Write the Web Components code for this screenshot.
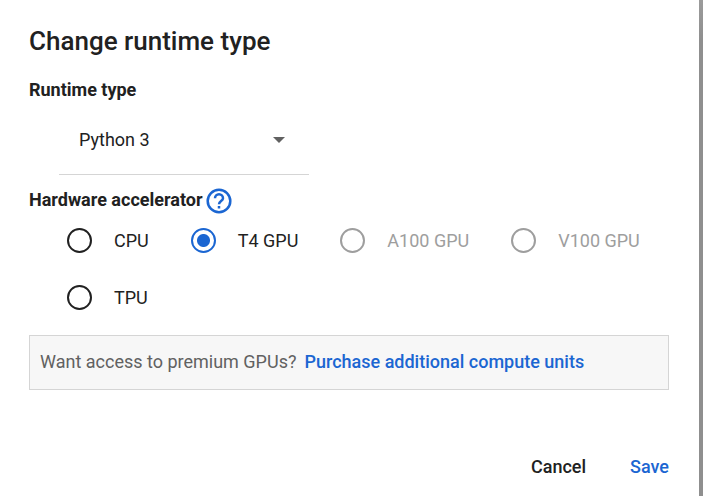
<!DOCTYPE html>
<html lang="en">
<head>
<meta charset="utf-8">
<title>Change runtime type</title>
<style>
  body {
    margin: 0;
    min-height: 100vh;
    background: linear-gradient(#9b9b9b, #8f8f8f 40px);
    display: flex;
    font: 18px/24px Roboto, sans-serif;
    color: #212121;
    --blue: #1b66d2;
    --grey: #616161;
    --line: #d5d5d5;
  }
</style>
</head>
<body>
<runtime-dialog heading="Change runtime type">
  <runtime-select label="Runtime type" options="Python 3,R"></runtime-select>
  <accelerator-picker label="Hardware accelerator" options="CPU,T4 GPU,A100 GPU,V100 GPU,TPU" disabled="A100 GPU,V100 GPU" value="T4 GPU"></accelerator-picker>
  <upgrade-banner href="#signup">
    Want access to premium GPUs?
    <span slot="link">Purchase additional compute units</span>
  </upgrade-banner>
  <dialog-button slot="actions">Cancel</dialog-button>
  <dialog-button slot="actions" primary>Save</dialog-button>
</runtime-dialog>

<script>
class RuntimeDialog extends HTMLElement {
  constructor() {
    super();
    this.attachShadow({ mode: "open" });
  }
  connectedCallback() {
    this.shadowRoot.innerHTML = `
    <style>
      :host {
        flex: 1;
        display: flex;
        flex-direction: column;
        box-sizing: border-box;
        margin-right: 4px;
        padding: 25px 30px 17px 29px;
        background: #fff;
      }
      h2 {
        margin: 0 0 21px;
        font-size: 26px;
        line-height: 32px;
        font-weight: 500;
      }
      footer {
        display: flex;
        justify-content: flex-end;
        gap: 44px;
        margin-top: auto;
      }
    </style>
    <h2>${this.getAttribute("heading")}</h2>
    <slot></slot>
    <footer><slot name="actions"></slot></footer>
    `;
  }
}

class RuntimeSelect extends HTMLElement {
  constructor() {
    super();
    this.attachShadow({ mode: "open" });
  }
  connectedCallback() {
    const options = this.getAttribute("options").split(",");
    this.shadowRoot.innerHTML = `
    <style>
      :host { display: block; }
      label { display: block; font-weight: 700; }
      .field {
        display: flex;
        align-items: center;
        box-sizing: border-box;
        width: 250px;
        height: 73px;
        padding-top: 4px;
        margin: 0 30px 13px;
        border-bottom: 1px solid var(--line);
      }
      select {
        flex: 1;
        appearance: none;
        margin-right: -36px;
        padding: 0 36px 0 20px;
        border: 0;
        background: none;
        font: inherit;
        color: inherit;
      }
      svg { pointer-events: none; margin-right: 24px; }
    </style>
    <label for="type">${this.getAttribute("label")}</label>
    <div class="field">
      <select id="type">${options.map((o) => `<option>${o}</option>`).join("")}</select>
      <svg width="12" height="6" viewBox="0 0 12 6"><path d="M0 0h12L6 6z" fill="#616161"/></svg>
    </div>
    `;
  }
}

class AcceleratorPicker extends HTMLElement {
  constructor() {
    super();
    this.attachShadow({ mode: "open" });
  }
  connectedCallback() {
    const options = this.getAttribute("options").split(",");
    const disabled = this.getAttribute("disabled").split(",");
    const value = this.getAttribute("value");
    this.shadowRoot.innerHTML = `
    <style>
      :host { display: block; margin-bottom: 9px; }
      .title { display: flex; align-items: flex-start; gap: 3px; height: 24px; }
      .title span { font-weight: 700; }
      .title a { display: flex; color: var(--blue); }
      .options {
        display: flex;
        flex-wrap: wrap;
        column-gap: 42px;
        padding-left: 38px;
      }
      label { display: flex; align-items: center; gap: 22px; height: 57px; }
      input {
        appearance: none;
        box-sizing: border-box;
        width: 25px;
        height: 25px;
        margin: 0;
        border: 2px solid #212121;
        border-radius: 50%;
      }
      input:disabled { border-color: #9e9e9e; }
      input:checked {
        border-color: var(--blue);
        background: radial-gradient(circle, var(--blue) 6px, transparent 7px);
      }
      label.off { color: #9e9e9e; }
    </style>
    <div class="title">
      <span id="title">${this.getAttribute("label")}</span>
      <a href="#help" aria-label="Help">
        <svg width="26" height="26" viewBox="0 0 26 26" fill="none" stroke="currentColor" stroke-width="2.5">
          <circle cx="13" cy="13" r="11.3"/>
          <path d="M9 10.3a4 4 0 1 1 8 0c0 2.7-4 2.9-4 6"/>
          <path d="M13 18v2.5"/>
        </svg>
      </a>
    </div>
    <div class="options" role="radiogroup" aria-labelledby="title">
      ${options.map((o) => `
        <label class="${disabled.includes(o) ? "off" : ""}">
          <input type="radio" name="accelerator" ${o === value ? "checked" : ""} ${disabled.includes(o) ? "disabled" : ""}>
          <span>${o}</span>
        </label>`).join("")}
    </div>
    `;
  }
}

class UpgradeBanner extends HTMLElement {
  constructor() {
    super();
    this.attachShadow({ mode: "open" });
  }
  connectedCallback() {
    this.shadowRoot.innerHTML = `
    <style>
      :host {
        display: flex;
        flex-wrap: wrap;
        gap: 0 8px;
        padding: 14px 10px 15px;
        border: 1px solid var(--line);
        background: #f7f7f7;
        color: var(--grey);
      }
      a { color: var(--blue); font-weight: 500; text-decoration: none; }
    </style>
    <span><slot></slot></span>
    <a href="${this.getAttribute("href")}"><slot name="link"></slot></a>
    `;
  }
}

class DialogButton extends HTMLElement {
  constructor() {
    super();
    this.attachShadow({ mode: "open" });
    this.shadowRoot.innerHTML = `
    <style>
      :host { display: block; }
      button {
        padding: 0;
        border: 0;
        background: none;
        font: inherit;
        font-weight: 500;
        color: inherit;
        cursor: pointer;
      }
      :host([primary]) button { color: var(--blue); }
    </style>
    <button type="button"><slot></slot></button>
    `;
  }
}

customElements.define("runtime-dialog", RuntimeDialog);
customElements.define("runtime-select", RuntimeSelect);
customElements.define("accelerator-picker", AcceleratorPicker);
customElements.define("upgrade-banner", UpgradeBanner);
customElements.define("dialog-button", DialogButton);
</script>
</body>
</html>
